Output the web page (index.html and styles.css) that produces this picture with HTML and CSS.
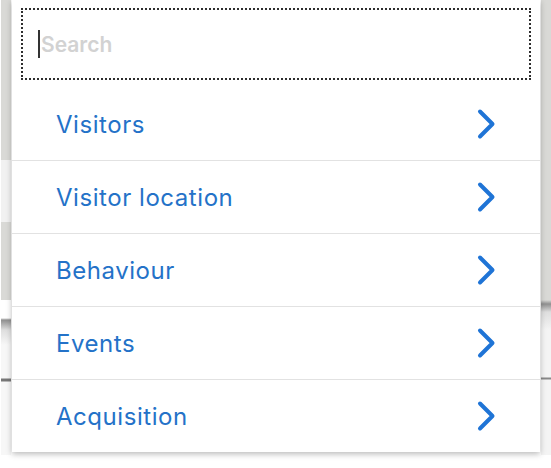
FILE: index.html
```html
<!DOCTYPE html>
<html lang="en">
<head>
    <meta charset="UTF-8">
    <meta name="viewport" content="width=device-width, initial-scale=1.0">
    <title>Reports menu</title>
    <link rel="stylesheet" href="styles.css">
</head>
<body>
    <div class="dropdown">
        <div class="search-wrap">
            <div class="search">
                <span class="caret"></span>
                <span class="placeholder">Search</span>
            </div>
        </div>

        <a href="#" class="menu-item">
            <span class="label">Visitors</span>
            <svg class="chevron" viewBox="0 0 20 32"><path d="M4 3.5 L16.5 16 L4 28.5"/></svg>
        </a>
        <a href="#" class="menu-item">
            <span class="label">Visitor location</span>
            <svg class="chevron" viewBox="0 0 20 32"><path d="M4 3.5 L16.5 16 L4 28.5"/></svg>
        </a>
        <a href="#" class="menu-item">
            <span class="label">Behaviour</span>
            <svg class="chevron" viewBox="0 0 20 32"><path d="M4 3.5 L16.5 16 L4 28.5"/></svg>
        </a>
        <a href="#" class="menu-item">
            <span class="label">Events</span>
            <svg class="chevron" viewBox="0 0 20 32"><path d="M4 3.5 L16.5 16 L4 28.5"/></svg>
        </a>
        <a href="#" class="menu-item">
            <span class="label">Acquisition</span>
            <svg class="chevron" viewBox="0 0 20 32"><path d="M4 3.5 L16.5 16 L4 28.5"/></svg>
        </a>
    </div>
</body>
</html>
```

FILE: styles.css
```css
body {
    font-family: Inter, 'Open Sans', 'Liberation Sans', sans-serif;
    margin: 0;
    height: 468px;
    background-color: #ffffff;
    /* page behind the menu peeks out on both sides */
    background-image:
        linear-gradient(to bottom,
            #d9d9d6 0, #d9d9d6 160px,
            #f1f1f1 160px, #f1f1f1 222px,
            #d9d9d6 222px, #d9d9d6 300px,
            #ffffff 300px, #ffffff 318px,
            #8f8f8f 320px, #dedede 330px, #f7f7f7 345px,
            #f7f7f7 378px, #777 379px, #777 381px,
            #f7f7f7 382px, #f7f7f7 455px,
            #ffffff 455px),
        linear-gradient(to bottom,
            #d9d9d6 0, #d9d9d6 300px,
            #8f8f8f 304px, #dedede 312px, #f4f4f4 330px,
            #f4f4f4 377px, #888 378px, #888 379px,
            #f4f4f4 380px, #f4f4f4 455px,
            #ffffff 455px);
    background-size: 10px 100%, 10px 100%;
    background-position: 1px 0, 541px 0;
    background-repeat: no-repeat;
}

.dropdown {
    position: absolute;
    left: 12px;
    top: 0;
    width: 528px;
    background-color: #ffffff;
    box-shadow: 0 2px 6px rgba(0, 0, 0, 0.28);
}

.search-wrap {
    padding: 8px 9px 8px 9px;
}

.search {
    height: 68px;
    border: 2px dotted #2e2e2e;
    display: flex;
    align-items: center;
    padding-left: 15px;
}

.caret {
    display: inline-block;
    width: 2px;
    height: 28px;
    background-color: #333;
    margin-right: 1px;
}

.placeholder {
    font-size: 21px;
    font-weight: 600;
    color: #d2d2d2;
}

.menu-item {
    display: flex;
    justify-content: space-between;
    align-items: center;
    height: 72px;
    padding: 0 44px 0 44px;
    text-decoration: none;
    border-bottom: 1px solid #e2e2e2;
}

.menu-item:last-child {
    border-bottom: none;
}

.label {
    font-size: 24px;
    letter-spacing: 0.55px;
    color: #2472c8;
}

.chevron {
    width: 20px;
    height: 32px;
    fill: none;
    stroke: #1f74d6;
    stroke-width: 4;
    stroke-linecap: round;
    stroke-linejoin: round;
}
```
